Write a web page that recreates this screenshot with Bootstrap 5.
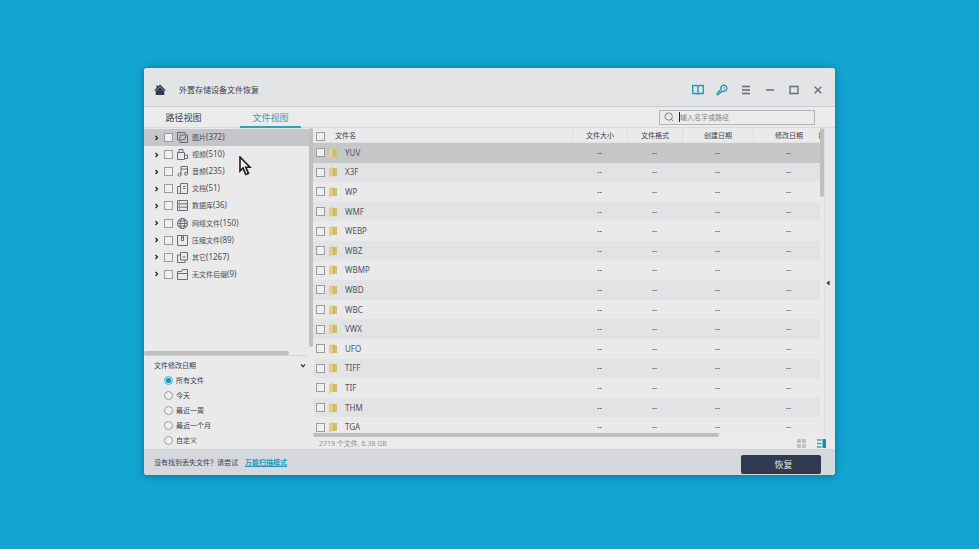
<!DOCTYPE html>
<html lang="zh-CN">
<head>
<meta charset="utf-8">
<meta name="viewport" content="width=device-width, initial-scale=1">
<title>外置存储设备文件恢复</title>
<link href="https://cdn.jsdelivr.net/npm/bootstrap@5.3.0/dist/css/bootstrap.min.css" rel="stylesheet">
<style>
  body { background: #12a5d1; color: #3c4251; font: 7px/1 "Noto Sans", "Noto Sans CJK SC", sans-serif; padding: 68px 144px 74px; }
  svg { display: block; fill: none; stroke: currentColor; flex: none; }
  button { background: none; border: 0; padding: 0; color: inherit; }
  .app { background: #eaeaea; border-radius: 3px; box-shadow: 0 1px 8px #0b6f98; overflow: hidden; }
  .titlebar { height: 39px; padding: 6px 11px 0 10px; background: #e2e4e6; border-bottom: 1px solid #cacdd0; }
  .titlebar h1 { font-size: 8px; line-height: 12px; margin: 0 0 0 13px; font-weight: 400; }
  .tools { gap: 12px; color: #626978; }
  .tools button { width: 12px; height: 12px; display: grid; place-items: center; }
  .tools .accent { color: #249bbd; }
  .tabs { height: 21px; border-bottom: 1px solid #d9dadb; padding-right: 20px; background: #ebebeb; }
  .tabs button { font-size: 9px; height: 21px; line-height: 21px; }
  .tab-a { width: 79px; }
  .tab-b { width: 61px; margin-left: 17px; color: #36a0b4; box-shadow: inset 0 -2px #36a0b4; }
  .search { width: 156px; height: 15px; border: 1px solid #b3b5b8; padding: 0 4px; color: #74777e; }
  .search input { border: 0; background: none; outline: 0; padding: 0; height: 11px; font-size: 7px; min-width: 0; }
  .search input::placeholder { color: #85878c; opacity: 1; }
  .caret { width: 1px; height: 10px; background: #222; margin-left: 5px; }
  .side { width: 169px; flex: none; }
  .tree { height: 155px; padding-top: 1px; }
  .tree-row { padding-left: 10px; color: #4a4f5c; }
  .tree-row.active { background: #c5c6c9; }
  .tree-row button { width: 10px; height: 12px; color: #222936; }
  .tree-row label { margin-left: 4px; line-height: 12px; white-space: nowrap; }
  .tree-row label span { font-size: 8px; }
  .tree-row > svg { margin-left: 4px; color: #5b606b; }
  .tick, .dot { appearance: none; width: 9px; height: 9px; margin: 0; border: 1px solid #9a9ca1; background: #efefef; flex: none; display: block; }
  .dot { border-radius: 50%; }
  .dot:checked { border-color: #54b5cd; background: radial-gradient(circle, #1693bb 0 2px, #b0e2ed 3px); }
  .bar { background: #bfbfbf; border-radius: 2px; }
  .bar-tree-v { width: 4px; height: 219px; flex: none; }
  .bar-tree-h { width: 86%; height: 4px; }
  .filter { margin-right: 7px; border-top: 1px solid #d0d1d2; padding: 2px 0 1px 10px; }
  .filter-title { line-height: 15px; }
  .choice { height: 15px; padding-left: 10px; gap: 3px; }
  .choice label { line-height: 13px; }
  .grid-area { overflow: hidden; min-width: 0; }
  .files { table-layout: fixed; width: 100%; height: 309px; border-collapse: separate; border-spacing: 0; }
  .files th, .files td { padding: 0; font-weight: 400; text-align: center; white-space: nowrap; overflow: hidden; }
  .files th { height: 15px; line-height: 12px; padding-top: 2px; border-left: 1px solid #dcdddf; border-bottom: 1px solid #dfe0e2; }
  .files th:first-child, .files th:last-child { border-left: 0; }
  .files th:nth-child(5), .files td:nth-child(5) { padding-left: 6px; }
  .files td { font-size: 8px; line-height: 12px; color: #50545f; }
  .files tbody tr:nth-child(even) { background: #e1e3e5; }
  .files tbody tr.picked { background: #c6c7c9; }
  .c-size { width: 55px; } .c-date { width: 71px; } .c-mod { width: 65px; } .c-cut { width: 2px; }
  .namebox { padding-left: 3px; }
  .namebox label { margin-left: 8px; }
  th .namebox label { margin-left: 10px; }
  .folder { margin-left: 4px; stroke: none; }
  .bar-files-h { position: absolute; left: 0; bottom: 0; width: 80%; height: 4px; }
  .bar-files-v { width: 4px; height: 69px; flex: none; }
  .strip { width: 11px; flex: none; border-left: 1px solid #dddedf; background: #e6e7e8; }
  .app .strip { padding-right: 4px; }
  .status { height: 12px; padding: 0 9px 0 6px; gap: 11px; color: #909297; background: #ebebeb; }
  .foot { height: 26px; background: #d5d8dc; border-top: 1px solid #cfd2d6; padding: 0 14px 0 10px; }
  .foot a { color: #219ac0; font-weight: 700; margin-left: 7px; }
  .foot button { width: 80px; height: 19px; background: #2f3a4f; color: #e4e6ea; font-size: 9px; border-radius: 2px; margin-top: 4px; padding-left: 5px; }
  .pointer { position: absolute; left: 239px; top: 156px; }
</style>
<script src="https://cdn.jsdelivr.net/npm/bootstrap@5.3.0/dist/js/bootstrap.bundle.min.js"></script>
</head>
<body class="min-vh-100 d-flex">
<main class="app flex-grow-1 d-flex flex-column">
  <header class="titlebar d-flex align-items-center">
    <svg width="12" height="12" viewBox="0 0 12 12"><path d="M6 .5 11.8 6.2 11 7 6 2.400 1 7 .2 6.200 2.500 4V1.500H4v1zM6 3 10.300 7v4H1.700V7z" fill="#2e394d" stroke="none"/></svg>
    <h1>外置存储设备文件恢复</h1>
    <div class="tools d-flex ms-auto">
      <button class="accent" aria-label="手册"><svg width="12" height="12" viewBox="0 0 12 12" stroke-width="1.400"><path d="M.7 1.500H4.500Q6 1.500 6 3Q6 1.500 7.500 1.500h3.800v8H7.500Q6 9.500 6 10.800Q6 9.500 4.500 9.500H.7zM6 3v7.500"/></svg></button>
      <button class="accent" aria-label="注册"><svg width="12" height="12" viewBox="0 0 12 12" stroke-width="1.400"><path d="M5 5.200A3 3 0 1 1 7.200 7.200L5.800 7.300 5.300 8.400 4.200 8.500 3.500 9.800 1.500 10.800 1.200 9.200z"/><path d="M7.500 3.500 8.500 4.500"/></svg></button>
      <button aria-label="菜单"><svg width="10" height="10" viewBox="0 0 10 10" stroke-width="1.300"><path d="M1 1.500h8M1 5h8M1 8.500h8"/></svg></button>
      <button aria-label="最小化"><svg width="10" height="10" viewBox="0 0 10 10" stroke-width="1.300"><path d="M1 5h8"/></svg></button>
      <button aria-label="最大化"><svg width="10" height="10" viewBox="0 0 10 10" stroke-width="1.300"><path d="M1 1.500h8v7H1z"/></svg></button>
      <button aria-label="关闭"><svg width="10" height="10" viewBox="0 0 10 10" stroke-width="1.300"><path d="m1.700 1.700 6.600 6.600m0-6.600L1.700 8.300"/></svg></button>
    </div>
  </header>
  <nav class="tabs d-flex align-items-center">
    <button class="tab-a">路径视图</button>
    <button class="tab-b">文件视图</button>
    <div class="search d-flex align-items-center ms-auto">
      <svg width="10" height="10" viewBox="0 0 10 10" stroke-width=".9"><circle cx="4.700" cy="4.500" r="3.700"/><path d="m7.300 7.200 2 2"/></svg>
      <span class="caret"></span>
      <input class="flex-grow-1" type="text" placeholder="输入名字或路径" aria-label="搜索">
    </div>
  </nav>
  <div class="d-flex flex-grow-1">
    <aside class="side d-flex flex-column">
      <div class="d-flex flex-grow-1">
        <div class="tree d-grid flex-grow-1" id="tree"></div>
        <div class="bar bar-tree-v"></div>
      </div>
      <div class="bar bar-tree-h"></div>
      <div class="filter" role="group" aria-labelledby="when-title">
        <div class="filter-title d-flex justify-content-between align-items-center"><span id="when-title">文件修改日期</span>
          <svg width="6" height="6" viewBox="0 0 6 6" stroke="#252c39" stroke-width="1.300"><path d="m1 1.500 2 2.300 2-2.300"/></svg></div>
        <div class="choice d-flex align-items-center"><input class="dot" type="radio" name="when" id="w1" checked><label for="w1">所有文件</label></div>
        <div class="choice d-flex align-items-center"><input class="dot" type="radio" name="when" id="w2"><label for="w2">今天</label></div>
        <div class="choice d-flex align-items-center"><input class="dot" type="radio" name="when" id="w3"><label for="w3">最近一周</label></div>
        <div class="choice d-flex align-items-center"><input class="dot" type="radio" name="when" id="w4"><label for="w4">最近一个月</label></div>
        <div class="choice d-flex align-items-center"><input class="dot" type="radio" name="when" id="w5"><label for="w5">自定义</label></div>
      </div>
    </aside>
    <section class="flex-grow-1 d-flex flex-column grid-area">
      <div class="d-flex flex-grow-1">
        <div class="flex-grow-1 position-relative grid-area">
          <table class="files">
            <colgroup><col><col class="c-size"><col class="c-size"><col class="c-date"><col class="c-mod"><col class="c-cut"></colgroup>
            <thead><tr>
              <th><div class="namebox d-flex align-items-center"><input class="tick" type="checkbox" id="all"><label for="all">文件名</label></div></th>
              <th>文件大小</th><th>文件格式</th><th>创建日期</th><th>修改日期</th><th class="text-start">目</th>
            </tr></thead>
            <tbody id="rows"></tbody>
          </table>
          <div class="bar bar-files-h"></div>
        </div>
        <div class="bar bar-files-v"></div>
        <button class="strip d-flex align-items-center justify-content-center" aria-label="展开预览"><svg width="4" height="6" viewBox="0 0 4 6"><path d="M3.500.5v5L.5 3z" fill="#252c39" stroke="none"/></svg></button>
      </div>
      <div class="status d-flex align-items-center">
        <span>2719 个文件, 6.38 GB</span>
        <button class="ms-auto" aria-label="图标视图"><svg width="9" height="9" viewBox="0 0 9 9"><path d="M0 0h4v4H0zM5 0h4v4H5zM0 5h4v4H0zM5 5h4v4H5z" fill="#bfc1c4" stroke="none"/></svg></button>
        <button aria-label="列表视图"><svg width="9" height="9" viewBox="0 0 9 9"><path d="M5.500 0H9v9H5.500z" fill="#168fb5" stroke="none"/><path d="M0 1h4.500M0 4.500h4.500M0 8h4.500" stroke="#3ba7ae" stroke-width="1.500"/></svg></button>
      </div>
    </section>
  </div>
  <footer class="foot d-flex align-items-center">
    <span>没有找到丢失文件？请尝试</span><a href="#">万能扫描模式</a>
    <button class="ms-auto">恢复</button>
  </footer>
</main>
<svg class="pointer" width="13" height="20" viewBox="0 0 13 20"><path d="M1 1v14l3-3 2.800 6.500 2.700-1.200-2.800-6.100H11z" fill="#f2f2f2" stroke="#1c1c1c" stroke-width="1.600"/></svg>
<script>
  const groups = [
    ['图片', 372, '<path d="M3 8H.5V.5H8V3M3 3h7.500v7.500H3zM4 9l2-2 1 1 2-2.500"/><circle cx="8.500" cy="5" r=".5"/>'],
    ['视频', 510, '<path d="M.5 3.500h7v7h-7zM2 3.500V.5h4v3M7.500 6h3v3.500h-3"/>'],
    ['音频', 235, '<path d="M4 8.500V.5h6.500v7M4 3h6.500"/><circle cx="2.500" cy="8.700" r="1.500"/><circle cx="9" cy="7.700" r="1.500"/>'],
    ['文档', 51, '<path d="M3.500.5h7v10h-7zM3.500 3.500h-3v7h3M6 3.500h2.500M6 5.500h2.500"/>'],
    ['数据库', 36, '<path d="M.5.5h10v10H.5zM.5 3.800h10M.5 7.200h10M2 2.200h1M2 5.500h1M2 8.900h1"/>'],
    ['网络文件', 150, '<circle cx="5.500" cy="5.500" r="5"/><ellipse cx="5.500" cy="5.500" rx="2.300" ry="5"/><path d="M.5 5.500h10M1.200 3h8.600M1.200 8h8.600"/>'],
    ['压缩文件', 89, '<path d="M.5.5h10v10H.5zM4.500.5v5h2v-5M5 2.500h1"/>'],
    ['其它', 1267, '<path d="M3.500.5h7V8h-7zM3.500 3h-3v7.500H8V8M5.500 5h3"/>'],
    ['无文件后缀', 9, '<path d="M.5 10.500v-8h4l1-2h5v10zM.5 4.500h10"/>']
  ];
  document.getElementById('tree').innerHTML = groups.map(([name, count, icon], i) => `
    <div class="tree-row d-flex align-items-center${i ? '' : ' active'}">
      <button aria-label="展开${name}"><svg width="5" height="6" viewBox="0 0 5 6" stroke-width="1.300"><path d="m1.500 1 2 2-2 2"/></svg></button>
      <input class="tick" type="checkbox" id="g${i}">
      <svg width="11" height="11" viewBox="0 0 11 11" stroke-width=".9">${icon}</svg>
      <label for="g${i}">${name}<span>(${count})</span></label>
    </div>`).join('');
  const types = ['YUV', 'X3F', 'WP', 'WMF', 'WEBP', 'WBZ', 'WBMP', 'WBD', 'WBC', 'VWX', 'UFO', 'TIFF', 'TIF', 'THM', 'TGA'];
  document.getElementById('rows').innerHTML = types.map((t, i) => `
    <tr${i ? '' : ' class="picked"'}><td><div class="namebox d-flex align-items-center">
      <input class="tick" type="checkbox" id="f${i}">
      <svg class="folder" width="8" height="10" viewBox="0 0 8 10"><path d="M0 1 5 0v9L0 10z" fill="#e3ce84"/><path d="M5 1h3v8H5z" fill="#d3bd74"/><path d="M4 1h1v8H4z" fill="#c9b26a"/></svg>
      <label for="f${i}">${t}</label></div></td><td>--</td><td>--</td><td>--</td><td>--</td><td></td></tr>`).join('');
</script>
</body>
</html>
